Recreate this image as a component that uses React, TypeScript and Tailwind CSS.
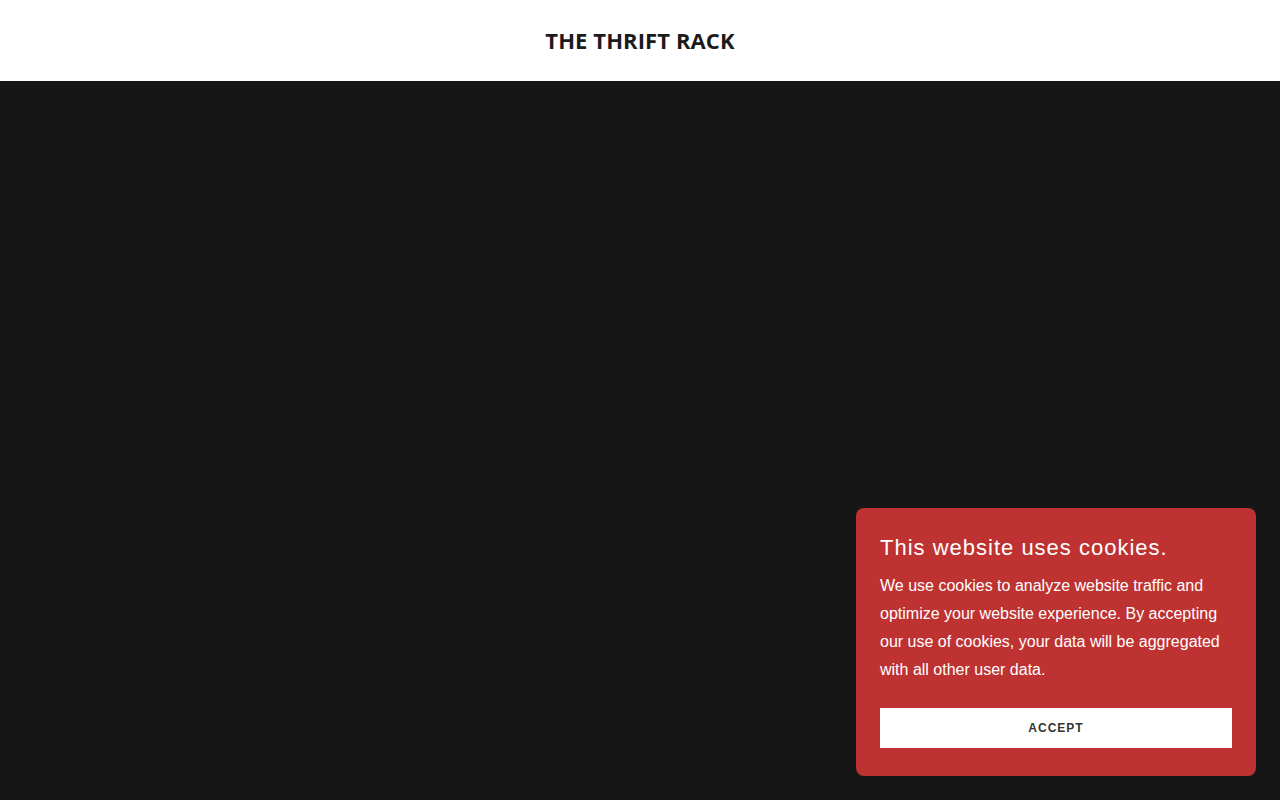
export default function App() {
  return (
    <div className="min-h-screen flex flex-col bg-[#161616]">
      <header className="h-[81px] bg-white flex items-center justify-center">
        <h1 className="text-[22px] font-bold tracking-[0.1px] text-[#1b1b1b] font-['Open_Sans',sans-serif]">
          THE THRIFT RACK
        </h1>
      </header>
      <main className="flex-1 h-[719px]" />

      <div className="fixed right-6 bottom-6 w-[400px] bg-[#be3232] rounded-lg px-6 pt-[25px] pb-7 font-['Liberation_Sans',Arial,sans-serif] text-white">
        <h2 className="text-[22px] leading-[30px] tracking-[1px] mb-[9px]">This website uses cookies.</h2>
        <p className="text-base leading-[28px]">
          We use cookies to analyze website traffic and optimize your website experience. By accepting our use of cookies, your data will be aggregated with all other user data.
        </p>
        <button className="mt-6 w-full h-10 bg-white text-[#333333] text-xs font-bold tracking-[1px]">
          ACCEPT
        </button>
      </div>
    </div>
  )
}
